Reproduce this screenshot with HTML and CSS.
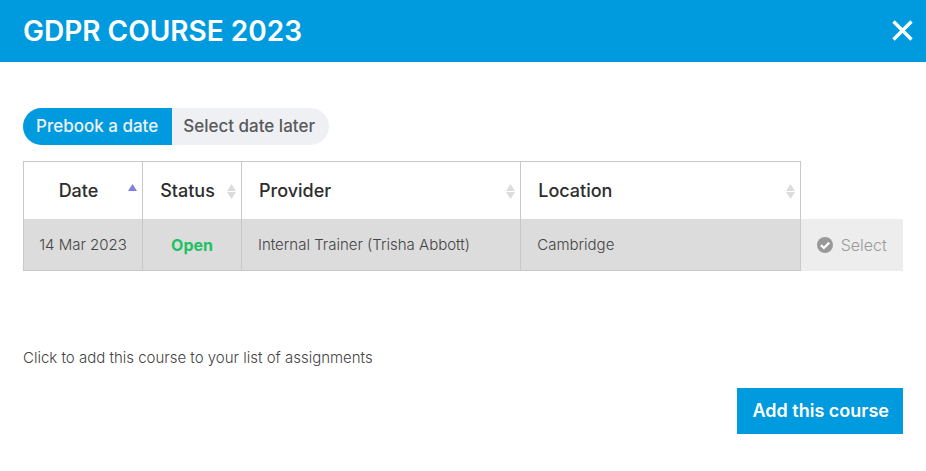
FILE: index.html
```html
<!doctype html>
<html lang="en">

<head>
    <meta charset="utf-8">
    <title>GDPR COURSE 2023</title>
    <link rel="stylesheet" href="styles.css">
</head>

<body>
    <div class="modal">
        <header class="modal-header">
            <h1>GDPR COURSE 2023</h1>
            <button type="button" class="close" aria-label="Close">
                <svg width="21" height="21" viewBox="0 0 21 21">
                    <path d="M1.500 1.500L19.500 19.500M19.500 1.500L1.500 19.500" stroke="#fff" stroke-width="3.400" />
                </svg>
            </button>
        </header>
        <main class="modal-body">
            <div class="toggle">
                <button type="button" class="active">Prebook a date</button>
                <button type="button">Select date later</button>
            </div>
            <table class="dates">
                <colgroup>
                    <col class="col-date">
                    <col class="col-status">
                    <col>
                    <col>
                    <col class="col-action">
                </colgroup>
                <thead>
                    <tr>
                        <th class="center">
                            <button type="button" class="sort">
                                <span>Date</span>
                                <svg width="9" height="15" viewBox="0 0 9 15">
                                    <path d="M0 7L4.500 0L9 7Z" fill="#8080e0" />
                                </svg>
                            </button>
                        </th>
                        <th class="center">
                            <button type="button" class="sort">
                                <span>Status</span>
                                <svg width="9" height="15" viewBox="0 0 9 15">
                                    <path d="M0 7L4.500 0L9 7ZM0 8L4.500 15L9 8Z" fill="#dcdcdc" />
                                </svg>
                            </button>
                        </th>
                        <th>
                            <button type="button" class="sort">
                                <span>Provider</span>
                                <svg width="9" height="15" viewBox="0 0 9 15">
                                    <path d="M0 7L4.500 0L9 7ZM0 8L4.500 15L9 8Z" fill="#dcdcdc" />
                                </svg>
                            </button>
                        </th>
                        <th>
                            <button type="button" class="sort">
                                <span>Location</span>
                                <svg width="9" height="15" viewBox="0 0 9 15">
                                    <path d="M0 7L4.500 0L9 7ZM0 8L4.500 15L9 8Z" fill="#dcdcdc" />
                                </svg>
                            </button>
                        </th>
                        <td class="empty"></td>
                    </tr>
                </thead>
                <tbody>
                    <tr>
                        <td class="center">14 Mar 2023</td>
                        <td class="center open">Open</td>
                        <td>Internal Trainer (Trisha Abbott)</td>
                        <td>Cambridge</td>
                        <td class="action">
                            <button type="button" class="select">
                                <svg width="16" height="16" viewBox="0 0 16 16">
                                    <circle cx="8" cy="8" r="8" fill="#999" />
                                    <path d="M4 8.200L6.900 11L12.200 5.600" fill="none" stroke="#fff" stroke-width="2.300" />
                                </svg>
                                Select
                            </button>
                        </td>
                    </tr>
                </tbody>
            </table>
            <p class="hint">Click to add this course to your list of assignments</p>
            <div class="actions">
                <button type="button" class="add">Add this course</button>
            </div>
        </main>
    </div>
</body>

</html>
```
FILE: styles.css
```css
* {
    box-sizing: border-box;
}

body {
    margin: 0;
    background: #fff;
    color: #444;
    font-family: Inter, "Liberation Sans", sans-serif;
    font-size: 15px;
    font-weight: 300;
    line-height: 20px;
}

button {
    border: 0;
    margin: 0;
    padding: 0;
    background: none;
    color: inherit;
    font: inherit;
    cursor: pointer;
}

svg {
    display: block;
    flex: none;
}

/* header bar */
.modal-header {
    display: flex;
    align-items: center;
    justify-content: space-between;
    padding: 13px 13px 13px 23px;
    background: #009bde;
    color: #fff;
}

.modal-header h1 {
    margin: 0;
    font-size: 28px;
    font-weight: 600;
    line-height: 36px;
}

.close {
    padding-bottom: 2px;
}

.modal-body {
    padding: 46px 23px 36px;
}

/* pill switch */
.toggle {
    display: flex;
    width: fit-content;
    border-radius: 19px;
    overflow: hidden;
    background: #eff0f3;
    color: #58595b;
    font-size: 17px;
    font-weight: 500;
    line-height: 36px;
}

.toggle button {
    padding: 0 14px 1px 11px;
}

.toggle .active {
    padding: 0 14px 1px 13px;
    background: #009bde;
    color: #eff0f3;
}

/* course dates */
.dates {
    width: 100%;
    margin-top: 16px;
    table-layout: fixed;
    border-collapse: collapse;
}

.col-date {
    width: 119px;
}

.col-status {
    width: 99px;
}

.col-action {
    width: 103px;
}

.dates th,
.dates td {
    padding: 0;
    border-left: 1px solid #c8c8c8;
    border-right: 1px solid #c8c8c8;
    text-align: left;
}

.dates th {
    border-top: 1px solid #c8c8c8;
}

.dates tbody td {
    padding: 16px 16px 15px;
    border-bottom: 1px solid #c8c8c8;
    background: #dcdcdc;
    white-space: nowrap;
}

.dates tbody .center {
    padding-left: 0;
    padding-right: 0;
}

.dates .center {
    text-align: center;
}

.sort {
    display: flex;
    align-items: center;
    gap: 12px;
    width: 100%;
    padding: 18px 5px 17px 17px;
    color: #2d2d2d;
    font-size: 18px;
    font-weight: 500;
    line-height: 22px;
    text-align: inherit;
}

.sort span {
    flex: 1;
}

.dates .open {
    color: #1fc163;
    font-size: 16px;
    font-weight: 700;
}

.dates .empty {
    border-right: 0;
}

.dates tbody .action {
    padding: 0;
    border-right: 0;
    border-bottom: 0;
    background: #ededed;
}

.select {
    display: flex;
    align-items: center;
    justify-content: center;
    gap: 8px;
    width: 100%;
    color: #999;
    font-size: 16px;
}

.hint {
    margin: 77px 0 20px;
}

.actions {
    display: flex;
    justify-content: flex-end;
}

.add {
    padding: 12px 14px 12px 15px;
    background: #009bde;
    color: #fff;
    font-size: 18px;
    font-weight: 600;
    line-height: 22px;
}
```
